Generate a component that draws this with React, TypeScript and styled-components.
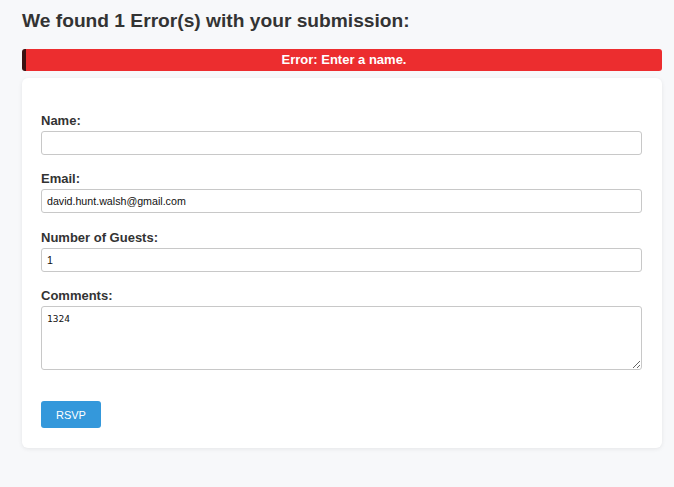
import React from "react";
import styled, { createGlobalStyle } from "styled-components";

const Global = createGlobalStyle`
  html, body { margin: 0; padding: 0; background: #f7f8fa; }
  body { font-family: "Liberation Sans", Arial, sans-serif; color: #333; }
  * { box-sizing: border-box; }
`;

const Page = styled.div`
  width: 640px;
  margin-left: 22px;
  padding-top: 9px;
  padding-bottom: 39px;
`;

const Heading = styled.h1`
  margin: 0 0 16px 0;
  font-size: 19.2px;
  line-height: 24px;
  font-weight: bold;
  color: #333;
`;

const ErrorBar = styled.div`
  background: #ec2d2f;
  border-left: 4px solid #3b1212;
  border-radius: 3px;
  color: #fff;
  font-size: 13px;
  font-weight: bold;
  line-height: 14px;
  padding: 4px 0;
  text-align: center;
  margin-bottom: 7px;
`;

const Card = styled.form`
  background: #fff;
  border-radius: 6px;
  box-shadow: 0 1px 4px rgba(0, 0, 0, 0.08);
  padding: 35px 20px 20px 19px;
  display: flex;
  flex-direction: column;
`;

const Field = styled.div`
  display: flex;
  flex-direction: column;
  gap: 2px;
  margin-bottom: 16.3px;
`;

const Label = styled.label`
  font-size: 13px;
  font-weight: bold;
  line-height: 16px;
  color: #333;
`;

const Input = styled.input`
  height: 24px;
  width: 100%;
  border: 1px solid #c8c8c8;
  border-radius: 3px;
  padding: 0 5px;
  font-family: "Liberation Sans", Arial, sans-serif;
  font-size: 10.67px;
  color: #111;
  background: #fff;
  outline: none;
`;

const TextArea = styled.textarea`
  height: 64px;
  width: 100%;
  border: 1px solid #c8c8c8;
  border-radius: 3px;
  padding: 6px 5px;
  font-family: "DejaVu Sans Mono", "Liberation Mono", monospace;
  font-size: 9.5px;
  color: #111;
  background: #fff;
  resize: vertical;
  outline: none;
`;

const Actions = styled.div`
  margin-top: 15px;
`;

const Button = styled.button`
  background: #3498db;
  color: #fff;
  border: none;
  border-radius: 3px;
  height: 27px;
  padding: 0 15px;
  font-family: "Liberation Sans", Arial, sans-serif;
  font-size: 11px;
  cursor: pointer;
`;

export default function App() {
  return (
    <>
      <Global />
      <Page>
        <Heading>We found 1 Error(s) with your submission:</Heading>
        <ErrorBar>Error: Enter a name.</ErrorBar>
        <Card onSubmit={(e) => e.preventDefault()}>
          <Field>
            <Label htmlFor="name">Name:</Label>
            <Input id="name" type="text" defaultValue="" />
          </Field>
          <Field>
            <Label htmlFor="email">Email:</Label>
            <Input id="email" type="text" defaultValue="david.hunt.walsh@gmail.com" />
          </Field>
          <Field>
            <Label htmlFor="guests">Number of Guests:</Label>
            <Input id="guests" type="text" defaultValue="1" />
          </Field>
          <Field>
            <Label htmlFor="comments">Comments:</Label>
            <TextArea id="comments" defaultValue="1324" />
          </Field>
          <Actions>
            <Button type="submit">RSVP</Button>
          </Actions>
        </Card>
      </Page>
    </>
  );
}
